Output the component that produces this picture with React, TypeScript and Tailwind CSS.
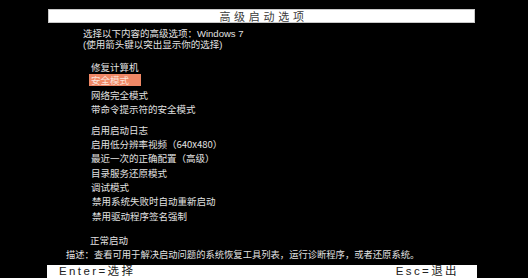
const groupA = ['修复计算机', '安全模式', '网络完全模式', '带命令提示符的安全模式'];
const groupB = [
  '启用启动日志',
  '启用低分辨率视频（640x480）',
  '最近一次的正确配置（高级）',
  '目录服务还原模式',
  '调试模式',
  '禁用系统失败时自动重新启动',
  '禁用驱动程序签名强制',
];

const selected = '安全模式';

function Item({ label }: { label: string }) {
  const active = label === selected;
  return (
    <div className="h-[14.3px] leading-[14.3px]">
      {active ? (
        <span className="-ml-[2px] inline-block h-[12.3px] w-[52px] bg-[#ef8866] pl-[2px] align-top leading-[12.3px] text-[#fbe4dc]">
          {label}
        </span>
      ) : (
        <span className={label.startsWith('禁用') ? 'pl-[1px]' : ''}>{label}</span>
      )}
    </div>
  );
}

export default function App() {
  return (
    <div
      className="flex h-[278px] w-[528px] flex-col overflow-hidden bg-black text-[9.5px] text-[#e2e2e2]"
      style={{ fontFamily: '"Noto Sans CJK SC", "Liberation Sans", sans-serif' }}
    >
      {/* Title bar */}
      <div className="ml-[48px] mt-[9px] flex h-[14px] w-[427px] shrink-0 items-center justify-center border border-[#c8c8c8] bg-white pl-[4px] text-[11px] leading-[14px] tracking-[3.7px] text-[#3a3a3a]">
        高级启动选项
      </div>

      {/* Intro */}
      <div
        className="ml-[83px] mt-[4.5px] shrink-0 text-[9.5px] leading-[11px]"
        style={{ fontFamily: '"Liberation Sans", "Noto Sans CJK SC", sans-serif' }}
      >
        <div>选择以下内容的高级选项：Windows 7</div>
        <div>(使用箭头键以突出显示你的选择)</div>
      </div>

      {/* Options */}
      <div className="ml-[91px] mt-[10px] shrink-0">
        {groupA.map((l) => (
          <Item key={l} label={l} />
        ))}
      </div>
      <div className="ml-[91px] mt-[6.1px] shrink-0">
        {groupB.map((l) => (
          <Item key={l} label={l} />
        ))}
      </div>
      <div className="ml-[90px] mt-[9.9px] h-[14.3px] shrink-0 leading-[14.3px]">正常启动</div>

      {/* Description */}
      <div className="ml-[66px] h-[14.3px] shrink-0 text-[9.3px] leading-[14.3px]">
        描述：查看可用于解决启动问题的系统恢复工具列表，运行诊断程序，或者还原系统。
      </div>

      {/* Footer bar */}
      <div
        className="ml-[47px] mt-[3.85px] flex h-[13px] w-[430px] shrink-0 justify-between bg-white pl-[12px] pr-[18px] text-[11.5px] leading-[13px] tracking-[2.4px] text-[#222]"
        style={{ fontFamily: '"Liberation Sans", "Noto Sans CJK SC", sans-serif' }}
      >
        <span>Enter=选择</span>
        <span>Esc=退出</span>
      </div>
    </div>
  );
}
